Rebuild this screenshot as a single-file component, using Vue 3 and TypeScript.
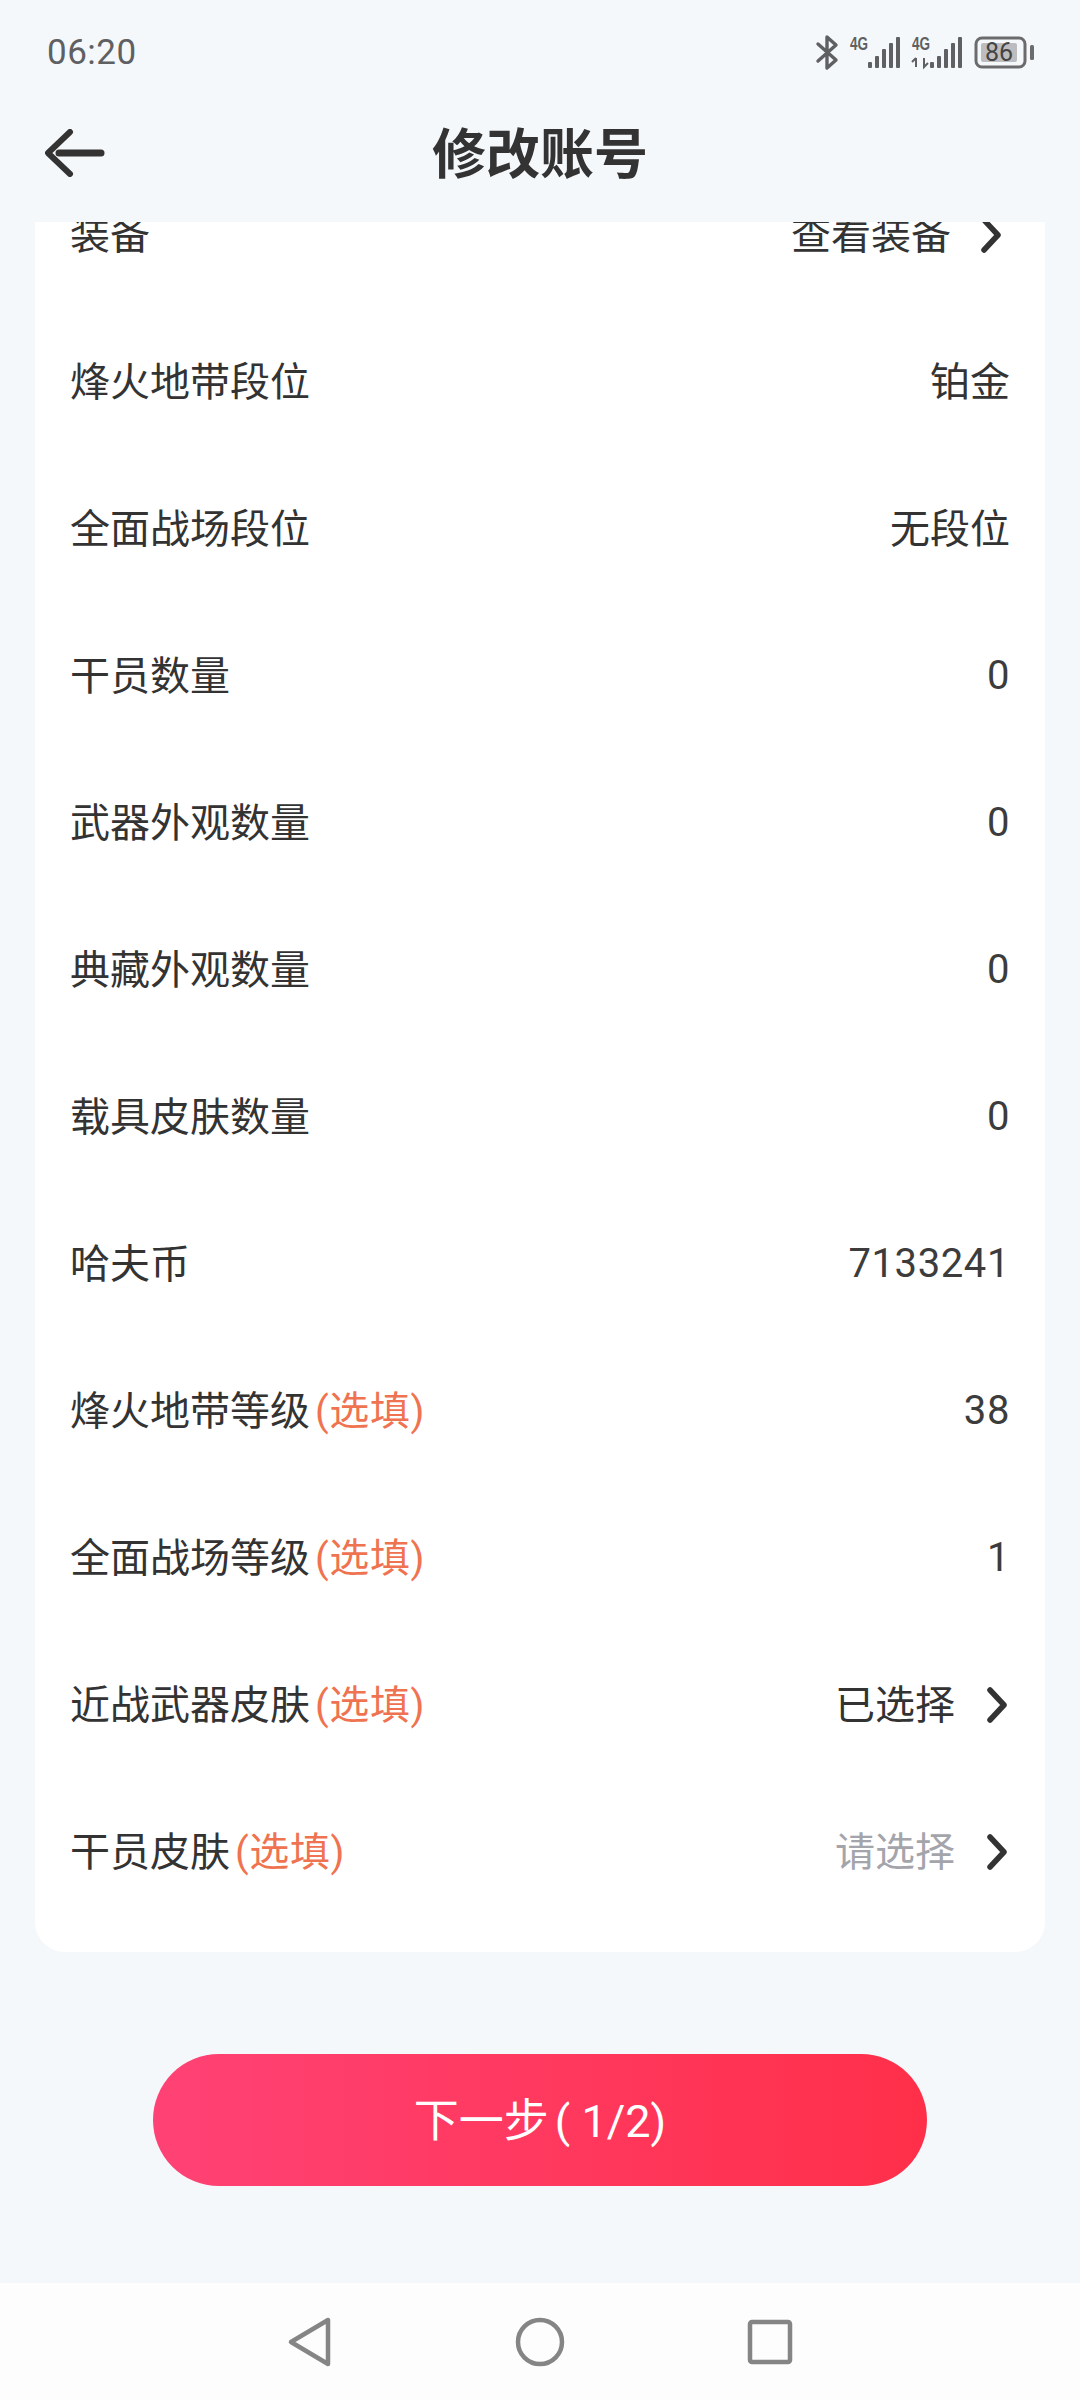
<template>
  <div class="page">
    <div class="status">
      <span class="time">06:20</span>
      <svg class="status-icons" width="224" height="40" viewBox="812 32 224 40">
        <path d="M818 44 L836 60 L827 68 L827 37 L836 45 L818 61" fill="none" stroke="#5f6062" stroke-width="3.4" stroke-linejoin="round" stroke-linecap="round" />
        <text x="850" y="50" class="tiny" textLength="18" lengthAdjust="spacingAndGlyphs">4G</text>
        <rect v-for="b in bars" :key="'a' + b.x" :x="b.x" :y="68 - b.h" width="4" :height="b.h" rx="1" fill="#5f6062" />
        <text x="912" y="50" class="tiny" textLength="18" lengthAdjust="spacingAndGlyphs">4G</text>
        <path d="M916 58 V67 M912 62 L916 58 M924 58 V67 L928 63" fill="none" stroke="#5f6062" stroke-width="2" />
        <rect v-for="b in bars2" :key="'b' + b.x" :x="b.x" :y="68 - b.h" width="4" :height="b.h" rx="1" fill="#5f6062" />
        <rect x="976" y="38" width="49" height="29" rx="6" fill="none" stroke="#6a6b6d" stroke-width="3" />
        <rect x="981" y="43" width="36" height="19" rx="2" fill="#bdbdbf" />
        <rect x="1030" y="45" width="4" height="15" rx="1.5" fill="#6a6b6d" />
        <text x="999" y="61" class="batt" text-anchor="middle">86</text>
      </svg>
    </div>

    <header class="header">
      <svg class="back" width="60" height="48" viewBox="0 0 60 48">
        <path d="M25 3 L3 24 L25 45" fill="none" stroke="#333" stroke-width="6" stroke-linecap="round" stroke-linejoin="round" />
        <path d="M14 24 H56" fill="none" stroke="#333" stroke-width="7" stroke-linecap="round" />
      </svg>
      <h1 class="title">修改账号</h1>
    </header>

    <section class="card">
      <div class="list">
        <div v-for="row in rows" :key="row.label" class="row">
          <div class="label">
            {{ row.label }}<span v-if="row.optional" class="optional">(选填)</span>
          </div>
          <div class="value" :class="{ placeholder: row.placeholder, lifted: !/^\d+$/.test(row.value) }">
            <span>{{ row.value }}</span>
            <svg v-if="row.link" class="chevron" :class="{ first: row.label === '装备' }" width="22" height="36" viewBox="0 0 22 36">
              <path d="M4 3 L18 18 L4 33" fill="none" stroke="#333" stroke-width="5.5" stroke-linecap="round" stroke-linejoin="round" />
            </svg>
          </div>
        </div>
      </div>
    </section>

    <div class="action">
      <button class="next">下一步<span class="step">( 1/2)</span></button>
    </div>

    <nav class="nav">
      <svg width="46" height="52" viewBox="0 0 46 52">
        <path d="M41 4 V48 L4 26 Z" fill="none" stroke="#858585" stroke-width="4.5" stroke-linejoin="round" />
      </svg>
      <svg width="52" height="52" viewBox="0 0 52 52">
        <circle cx="26" cy="26" r="22" fill="none" stroke="#858585" stroke-width="4.5" />
      </svg>
      <svg width="46" height="46" viewBox="0 0 46 46">
        <rect x="3" y="3" width="40" height="40" rx="2" fill="none" stroke="#858585" stroke-width="4.5" />
      </svg>
    </nav>
  </div>
</template>

<script setup lang="ts">
interface Row {
  label: string
  value: string
  optional?: boolean
  link?: boolean
  placeholder?: boolean
}

const rows: Row[] = [
  { label: '装备', value: '查看装备', link: true },
  { label: '烽火地带段位', value: '铂金' },
  { label: '全面战场段位', value: '无段位' },
  { label: '干员数量', value: '0' },
  { label: '武器外观数量', value: '0' },
  { label: '典藏外观数量', value: '0' },
  { label: '载具皮肤数量', value: '0' },
  { label: '哈夫币', value: '7133241' },
  { label: '烽火地带等级', value: '38', optional: true },
  { label: '全面战场等级', value: '1', optional: true },
  { label: '近战武器皮肤', value: '已选择', optional: true, link: true },
  { label: '干员皮肤', value: '请选择', optional: true, link: true, placeholder: true }
]

const bars = [
  { x: 868, h: 6 },
  { x: 875, h: 12 },
  { x: 882, h: 19 },
  { x: 889, h: 25 },
  { x: 896, h: 31 }
]

const bars2 = [
  { x: 930, h: 6 },
  { x: 937, h: 12 },
  { x: 944, h: 19 },
  { x: 951, h: 25 },
  { x: 958, h: 31 }
]
</script>

<style>
body {
  background: #f5f8fb;
}
</style>

<style scoped>
.page {
  width: 1080px;
  height: 2400px;
  display: flex;
  flex-direction: column;
  overflow: hidden;
  background: #f5f8fb;
  font-family: Roboto, "Noto Sans CJK SC", sans-serif;
  color: #333;
}

.status {
  height: 84px;
  box-sizing: border-box;
  padding: 20px 44px 0 47px;
  display: flex;
  align-items: center;
  justify-content: space-between;
}

.time {
  font-size: 35px;
  letter-spacing: 0.5px;
  color: #5f6062;
}

.tiny {
  font-family: "Liberation Sans", sans-serif;
  font-size: 18px;
  font-weight: 700;
  fill: #5f6062;
}

.batt {
  font-family: Roboto, sans-serif;
  font-size: 25px;
  fill: #444;
}

.header {
  height: 138px;
  position: relative;
  display: flex;
  align-items: center;
  justify-content: center;
}

.back {
  position: absolute;
  left: 45px;
  top: 45px;
}

.title {
  margin: 0 0 6px;
  font-size: 54px;
  font-weight: 700;
  color: #333;
}

.card {
  margin: 0 35px;
  height: 1730px;
  flex: none;
  overflow: hidden;
  background: #fff;
  border-radius: 0 0 30px 30px;
}

.list {
  margin-top: -61px;
}

.row {
  height: 147px;
  padding: 0 35px;
  display: flex;
  align-items: center;
  justify-content: space-between;
  font-size: 40px;
}

.label {
  margin-bottom: 6px;
}

.optional {
  margin-left: 5px;
  letter-spacing: 0.6px;
  color: #ef7350;
}

.value {
  display: flex;
  align-items: center;
  letter-spacing: 0.6px;
  color: #3c3c3c;
}

.value.lifted {
  letter-spacing: 0;
  color: #333;
}

.value.lifted span {
  margin-bottom: 6px;
}

.value.placeholder span {
  color: #a4a4ab;
}

.chevron {
  margin-left: 31px;
  margin-right: 2px;
}

.chevron.first {
  margin-left: 29px;
  margin-right: 8px;
}

.action {
  margin-top: 102px;
  display: flex;
  justify-content: center;
}

.next {
  width: 774px;
  height: 132px;
  padding: 0 0 5px;
  border: none;
  border-radius: 66px;
  background: linear-gradient(90deg, #ff4275, #ff2f49);
  color: #fff;
  font-family: Roboto, "Noto Sans CJK SC", sans-serif;
  font-size: 45px;
}

.step {
  margin-left: 6px;
}

.nav {
  margin-top: auto;
  height: 117px;
  background: #fdfdfd;
  display: flex;
  align-items: center;
  justify-content: center;
  gap: 181px;
}
</style>
